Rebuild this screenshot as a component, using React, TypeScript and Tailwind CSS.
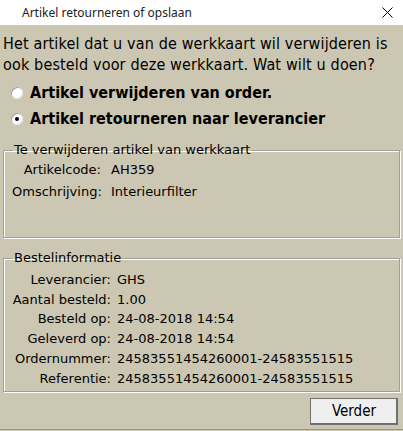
import React from "react";

const body = { fontFamily: '"DejaVu Sans Condensed", "DejaVu Sans", sans-serif' };
const verd = { fontFamily: '"DejaVu Sans", Verdana, sans-serif' };

function Radio({ checked }: { checked?: boolean }) {
  return (
    <span className="relative inline-block w-[12px] h-[12px] rounded-full bg-white shadow-[inset_1px_1px_0_#a0a0a0,inset_-1px_-1px_0_#e3e3e3]">
      {checked && <span className="absolute left-[4px] top-[4px] w-[4px] h-[4px] rounded-full bg-black" />}
    </span>
  );
}

function Row({ label, value }: { label: string; value: string }) {
  return (
    <div className="flex items-center h-[19.7px]">
      <div className="w-[100px] text-right shrink-0 whitespace-nowrap">{label}</div>
      <div className="pl-[6px] whitespace-nowrap">{value}</div>
    </div>
  );
}

export default function App() {
  return (
    <div className="w-[403px] h-[431px] bg-[#ccc7b3] flex flex-col text-black overflow-hidden relative">
      <div className="h-[25px] bg-white flex items-center justify-between shrink-0">
        <span className="pl-[22px] text-[12px] text-[#222]" style={{ fontFamily: '"Noto Sans", "Open Sans", sans-serif' }}>
          Artikel retourneren of opslaan
        </span>
        <svg width="11" height="11" viewBox="0 0 11 11" className="mr-[10px]">
          <path d="M0.5 0.5 L10.5 10.5 M10.5 0.5 L0.5 10.5" stroke="#000" strokeWidth="1" />
        </svg>
      </div>
      <div className="px-[3px] pt-[8px] text-[16px] leading-[21px] tracking-[0.15px] whitespace-nowrap" style={body}>
        <div>Het artikel dat u van de werkkaart wil verwijderen is</div>
        <div>ook besteld voor deze werkkaart. Wat wilt u doen?</div>
      </div>
      <div className="pl-[11px] pt-[5px] text-[16px] font-bold" style={body}>
        <div className="flex items-center gap-[7px] h-[26px]"><Radio /> Artikel verwijderen van order.</div>
        <div className="flex items-center gap-[7px] h-[26px]"><Radio checked /> Artikel retourneren naar leverancier</div>
      </div>
      <fieldset className="mx-[3px] mt-[11px] h-[95px] border border-[#a0a0a0] shadow-[inset_1px_1px_0_#fff,1px_1px_0_#fff] px-[8px] text-[13px]" style={verd}>
        <legend className="px-[1px] ml-[1px] leading-[14px]">Te verwijderen artikel van werkkaart</legend>
        <div className="pt-[2px]">
          <div className="flex items-center h-[22px]"><div className="w-[89px] text-right">Artikelcode:</div><div className="pl-[10px]">AH359</div></div>
          <div className="flex items-center h-[22px]"><div className="w-[89px] text-right">Omschrijving:</div><div className="pl-[10px]">Interieurfilter</div></div>
        </div>
      </fieldset>
      <fieldset className="mx-[3px] mt-[13px] h-[141px] border border-[#a0a0a0] shadow-[inset_1px_1px_0_#fff,1px_1px_0_#fff] px-[8px] text-[13px]" style={verd}>
        <legend className="px-[1px] ml-[1px] leading-[14px]">Bestelinformatie</legend>
        <div className="pt-[5px] -ml-[1px]">
          <Row label="Leverancier:" value="GHS" />
          <Row label="Aantal besteld:" value="1.00" />
          <Row label="Besteld op:" value="24-08-2018 14:54" />
          <Row label="Geleverd op:" value="24-08-2018 14:54" />
          <Row label="Ordernummer:" value="24583551454260001-24583551515" />
          <Row label="Referentie:" value="24583551454260001-24583551515" />
        </div>
      </fieldset>
      <div className="flex justify-end pr-[5px] pt-[6px]">
        <button className="w-[88px] h-[27px] bg-[#efefef] border border-[#707070] shadow-[inset_-1px_-1px_0_#707070] text-[15px]" style={body}>
          Verder
        </button>
      </div>
      <div className="absolute left-0 right-0 bottom-[1px] h-[1px] bg-[#5fa0e0]" />
    </div>
  );
}
